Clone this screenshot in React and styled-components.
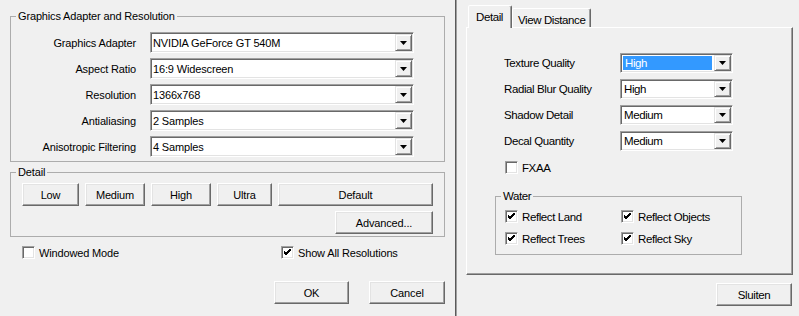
import React from 'react'
import styled, { createGlobalStyle } from 'styled-components'

const GlobalStyle = createGlobalStyle`
  html, body {
    margin: 0;
    padding: 0;
    background: #f0f0f0;
  }
  body {
    font-family: "Liberation Sans", Arial, sans-serif;
    font-size: 11px;
    color: #000;
  }
  * {
    box-sizing: border-box;
  }
`

const Screen = styled.div`
  display: flex;
  width: 799px;
  height: 316px;
  background: #f0f0f0;
  overflow: hidden;
`
const LeftWindow = styled.div`
  width: 455px;
  flex: none;
  display: flex;
  flex-direction: column;
  padding: 10px 10px 0 10px;
  font-size: 11px;
  letter-spacing: -0.15px;
`
const Divider = styled.div`
  width: 2px;
  flex: none;
  border-left: 1px solid #5a5a5a;
  border-right: 1px solid #a0a0a0;
`
const RightWindow = styled.div`
  flex: 1;
  display: flex;
  flex-direction: column;
  padding: 5px 6px 0 9px;
  font-size: 11.5px;
  letter-spacing: -0.4px;
`

const GroupBox = styled.fieldset`
  margin: ${(p) => p.$margin || '0'};
  padding: 0;
  min-width: 0;
  width: ${(p) => (p.$width ? `${p.$width}px` : 'auto')};
  border: 1px solid #acacac;
`
const GroupTitle = styled.legend`
  padding: 0 2px;
  margin-left: ${(p) => p.$indent || 5}px;
  line-height: 13px;
`
const GroupBody = styled.div`
  padding: ${(p) => p.$pad};
`

const FormGrid = styled.div`
  display: grid;
  grid-template-columns: ${(p) => p.$cols};
  column-gap: ${(p) => p.$gap || 0}px;
  row-gap: ${(p) => p.$rowGap}px;
  grid-auto-rows: ${(p) => p.$rowH}px;
  align-items: center;
`
const Label = styled.div`
  text-align: ${(p) => (p.$right ? 'right' : 'left')};
  white-space: nowrap;
`

const Combo = styled.div`
  display: flex;
  height: 100%;
  background: #fff;
  border: 1px solid;
  border-color: #a0a0a0 #fff #fff #a0a0a0;
  box-shadow: inset 1px 1px 0 #696969, inset -1px -1px 0 #e3e3e3;
  padding: 1px;
`
const ComboValue = styled.div`
  flex: 1;
  display: flex;
  align-items: center;
  padding-left: ${(p) => p.$indent}px;
  margin: ${(p) => (p.$selected ? '1px 2px 1px 1px' : '0')};
  background: ${(p) => (p.$selected ? '#3399ff' : 'transparent')};
  color: ${(p) => (p.$selected ? '#fff' : '#000')};
  white-space: nowrap;
  overflow: hidden;
`
const DropButton = styled.div`
  width: 17px;
  flex: none;
  display: flex;
  align-items: center;
  justify-content: center;
  background: #f0f0f0;
  border: 1px solid;
  border-color: #e3e3e3 #696969 #696969 #e3e3e3;
  box-shadow: inset 1px 1px 0 #fff, inset -1px -1px 0 #a0a0a0;
`

const Button = styled.button`
  font: inherit;
  letter-spacing: inherit;
  color: #000;
  height: 23px;
  width: ${(p) => p.$w}px;
  flex: none;
  padding: 0;
  background: #f0f0f0;
  border: 1px solid;
  border-color: #fff #696969 #696969 #fff;
  box-shadow: inset -1px -1px 0 #a0a0a0, inset 1px 1px 0 #e3e3e3;
`
const ButtonRow = styled.div`
  display: flex;
  gap: ${(p) => p.$gap}px;
  justify-content: ${(p) => (p.$end ? 'flex-end' : 'flex-start')};
  margin-top: ${(p) => p.$top || 0}px;
  padding-right: ${(p) => p.$inset || 0}px;
`

const CheckRow = styled.label`
  display: flex;
  align-items: center;
  gap: ${(p) => p.$gap || 4}px;
  height: 13px;
  white-space: nowrap;
`
const Box = styled.span`
  width: 13px;
  height: 13px;
  flex: none;
  display: flex;
  align-items: center;
  justify-content: center;
  background: #fff;
  border: 1px solid;
  border-color: #a0a0a0 #fff #fff #a0a0a0;
  box-shadow: inset 1px 1px 0 #696969, inset -1px -1px 0 #e3e3e3;
`
const CheckLine = styled.div`
  display: grid;
  grid-template-columns: ${(p) => p.$cols};
  margin: ${(p) => p.$margin};
`

const TabStrip = styled.div`
  display: flex;
  align-items: flex-start;
  height: 23px;
  margin-bottom: -1px;
  padding-left: 2px;
  position: relative;
  z-index: 1;
`
const Tab = styled.div`
  height: ${(p) => (p.$active ? 23 : 19)}px;
  width: ${(p) => p.$w}px;
  margin-top: ${(p) => (p.$active ? 0 : 3)}px;
  padding: ${(p) => (p.$active ? '4px 0 0 7px' : '4px 0 0 5px')};
  line-height: 14px;
  background: #f0f0f0;
  border: 1px solid;
  border-bottom: none;
  border-color: #fff #696969 transparent #fff;
  border-radius: 2px 2px 0 0;
  box-shadow: inset -1px 0 0 #a0a0a0;
  white-space: nowrap;
`
const TabPanel = styled.div`
  height: 248px;
  display: flex;
  flex-direction: column;
  border: 1px solid;
  border-color: #fff #696969 #696969 #fff;
  box-shadow: inset -1px -1px 0 #a0a0a0;
  padding: 25px 0 0 37px;
`

function Arrow() {
  return (
    <svg width="7" height="4" viewBox="0 0 7 4">
      <polygon points="0,0 7,0 3.5,4" fill="#000" />
    </svg>
  )
}

function Check() {
  return (
    <svg width="7" height="7" viewBox="0 0 7 7">
      <path d="M0 2 L2 4 L7 -1 M0 3 L2 5 L7 0 M0 4 L2 6 L7 1" stroke="#000" strokeWidth="1" fill="none" shapeRendering="crispEdges" />
    </svg>
  )
}

function Select({ value, selected, indent = 1 }) {
  return (
    <Combo>
      <ComboValue $selected={selected} $indent={indent}>{value}</ComboValue>
      <DropButton><Arrow /></DropButton>
    </Combo>
  )
}

function Checkbox({ label, checked }) {
  return (
    <CheckRow>
      <Box>{checked && <Check />}</Box>
      {label}
    </CheckRow>
  )
}

const adapterRows = [
  ['Graphics Adapter', 'NVIDIA GeForce GT 540M'],
  ['Aspect Ratio', '16:9 Widescreen'],
  ['Resolution', '1366x768'],
  ['Antialiasing', '2 Samples'],
  ['Anisotropic Filtering', '4 Samples'],
]

const detailRows = [
  ['Texture Quality', 'High', true],
  ['Radial Blur Quality', 'High'],
  ['Shadow Detail', 'Medium'],
  ['Decal Quantity', 'Medium'],
]

const presets = [
  ['Low', 57],
  ['Medium', 60],
  ['High', 60],
  ['Ultra', 55],
  ['Default', 155],
]

export default function App() {
  return (
    <Screen>
      <GlobalStyle />
      <LeftWindow>
        <GroupBox>
          <GroupTitle>Graphics Adapter and Resolution</GroupTitle>
          <GroupBody $pad="9px 0 4px 0">
            <FormGrid $cols="125px 264px" $gap={14} $rowGap={5} $rowH={21}>
              {adapterRows.map(([label, value]) => (
                <React.Fragment key={label}>
                  <Label $right>{label}</Label>
                  <Select value={value} />
                </React.Fragment>
              ))}
            </FormGrid>
          </GroupBody>
        </GroupBox>

        <GroupBox $margin="4px 0 0 0">
          <GroupTitle>Detail</GroupTitle>
          <GroupBody $pad="4px 11px 2px 11px">
            <ButtonRow $gap={6}>
              {presets.map(([name, w]) => (
                <Button key={name} $w={w}>{name}</Button>
              ))}
            </ButtonRow>
            <ButtonRow $gap={6} $end $top={5}>
              <Button $w={98}>Advanced...</Button>
            </ButtonRow>
          </GroupBody>
        </GroupBox>

        <CheckLine $cols="259px auto" $margin="9px 0 0 12px">
          <Checkbox label="Windowed Mode" />
          <Checkbox label="Show All Resolutions" checked />
        </CheckLine>

        <ButtonRow $gap={20} $end $top={22}>
          <Button $w={75}>OK</Button>
          <Button $w={76}>Cancel</Button>
        </ButtonRow>
      </LeftWindow>

      <Divider />

      <RightWindow>
        <TabStrip>
          <Tab $active $w={44}>Detail</Tab>
          <Tab $w={79}>View Distance</Tab>
        </TabStrip>
        <TabPanel>
          <FormGrid $cols="116px 113px" $rowGap={6} $rowH={20}>
            {detailRows.map(([label, value, sel]) => (
              <React.Fragment key={label}>
                <Label>{label}</Label>
                <Select value={value} selected={sel} indent={2} />
              </React.Fragment>
            ))}
          </FormGrid>
          <CheckLine $cols="auto" $margin="10px 0 0 1px">
            <Checkbox label="FXAA" />
          </CheckLine>
          <GroupBox $margin="16px 0 0 -9px" $width={247}>
            <GroupTitle $indent={5}>Water</GroupTitle>
            <GroupBody $pad="7px 0 9px 9px">
              <FormGrid $cols="116px auto" $rowGap={9} $rowH={13}>
                <Checkbox label="Reflect Land" checked />
                <Checkbox label="Reflect Objects" checked />
                <Checkbox label="Reflect Trees" checked />
                <Checkbox label="Reflect Sky" checked />
              </FormGrid>
            </GroupBody>
          </GroupBox>
        </TabPanel>
        <ButtonRow $gap={0} $end $top={8} $inset={1}>
          <Button $w={76}>Sluiten</Button>
        </ButtonRow>
      </RightWindow>
    </Screen>
  )
}
